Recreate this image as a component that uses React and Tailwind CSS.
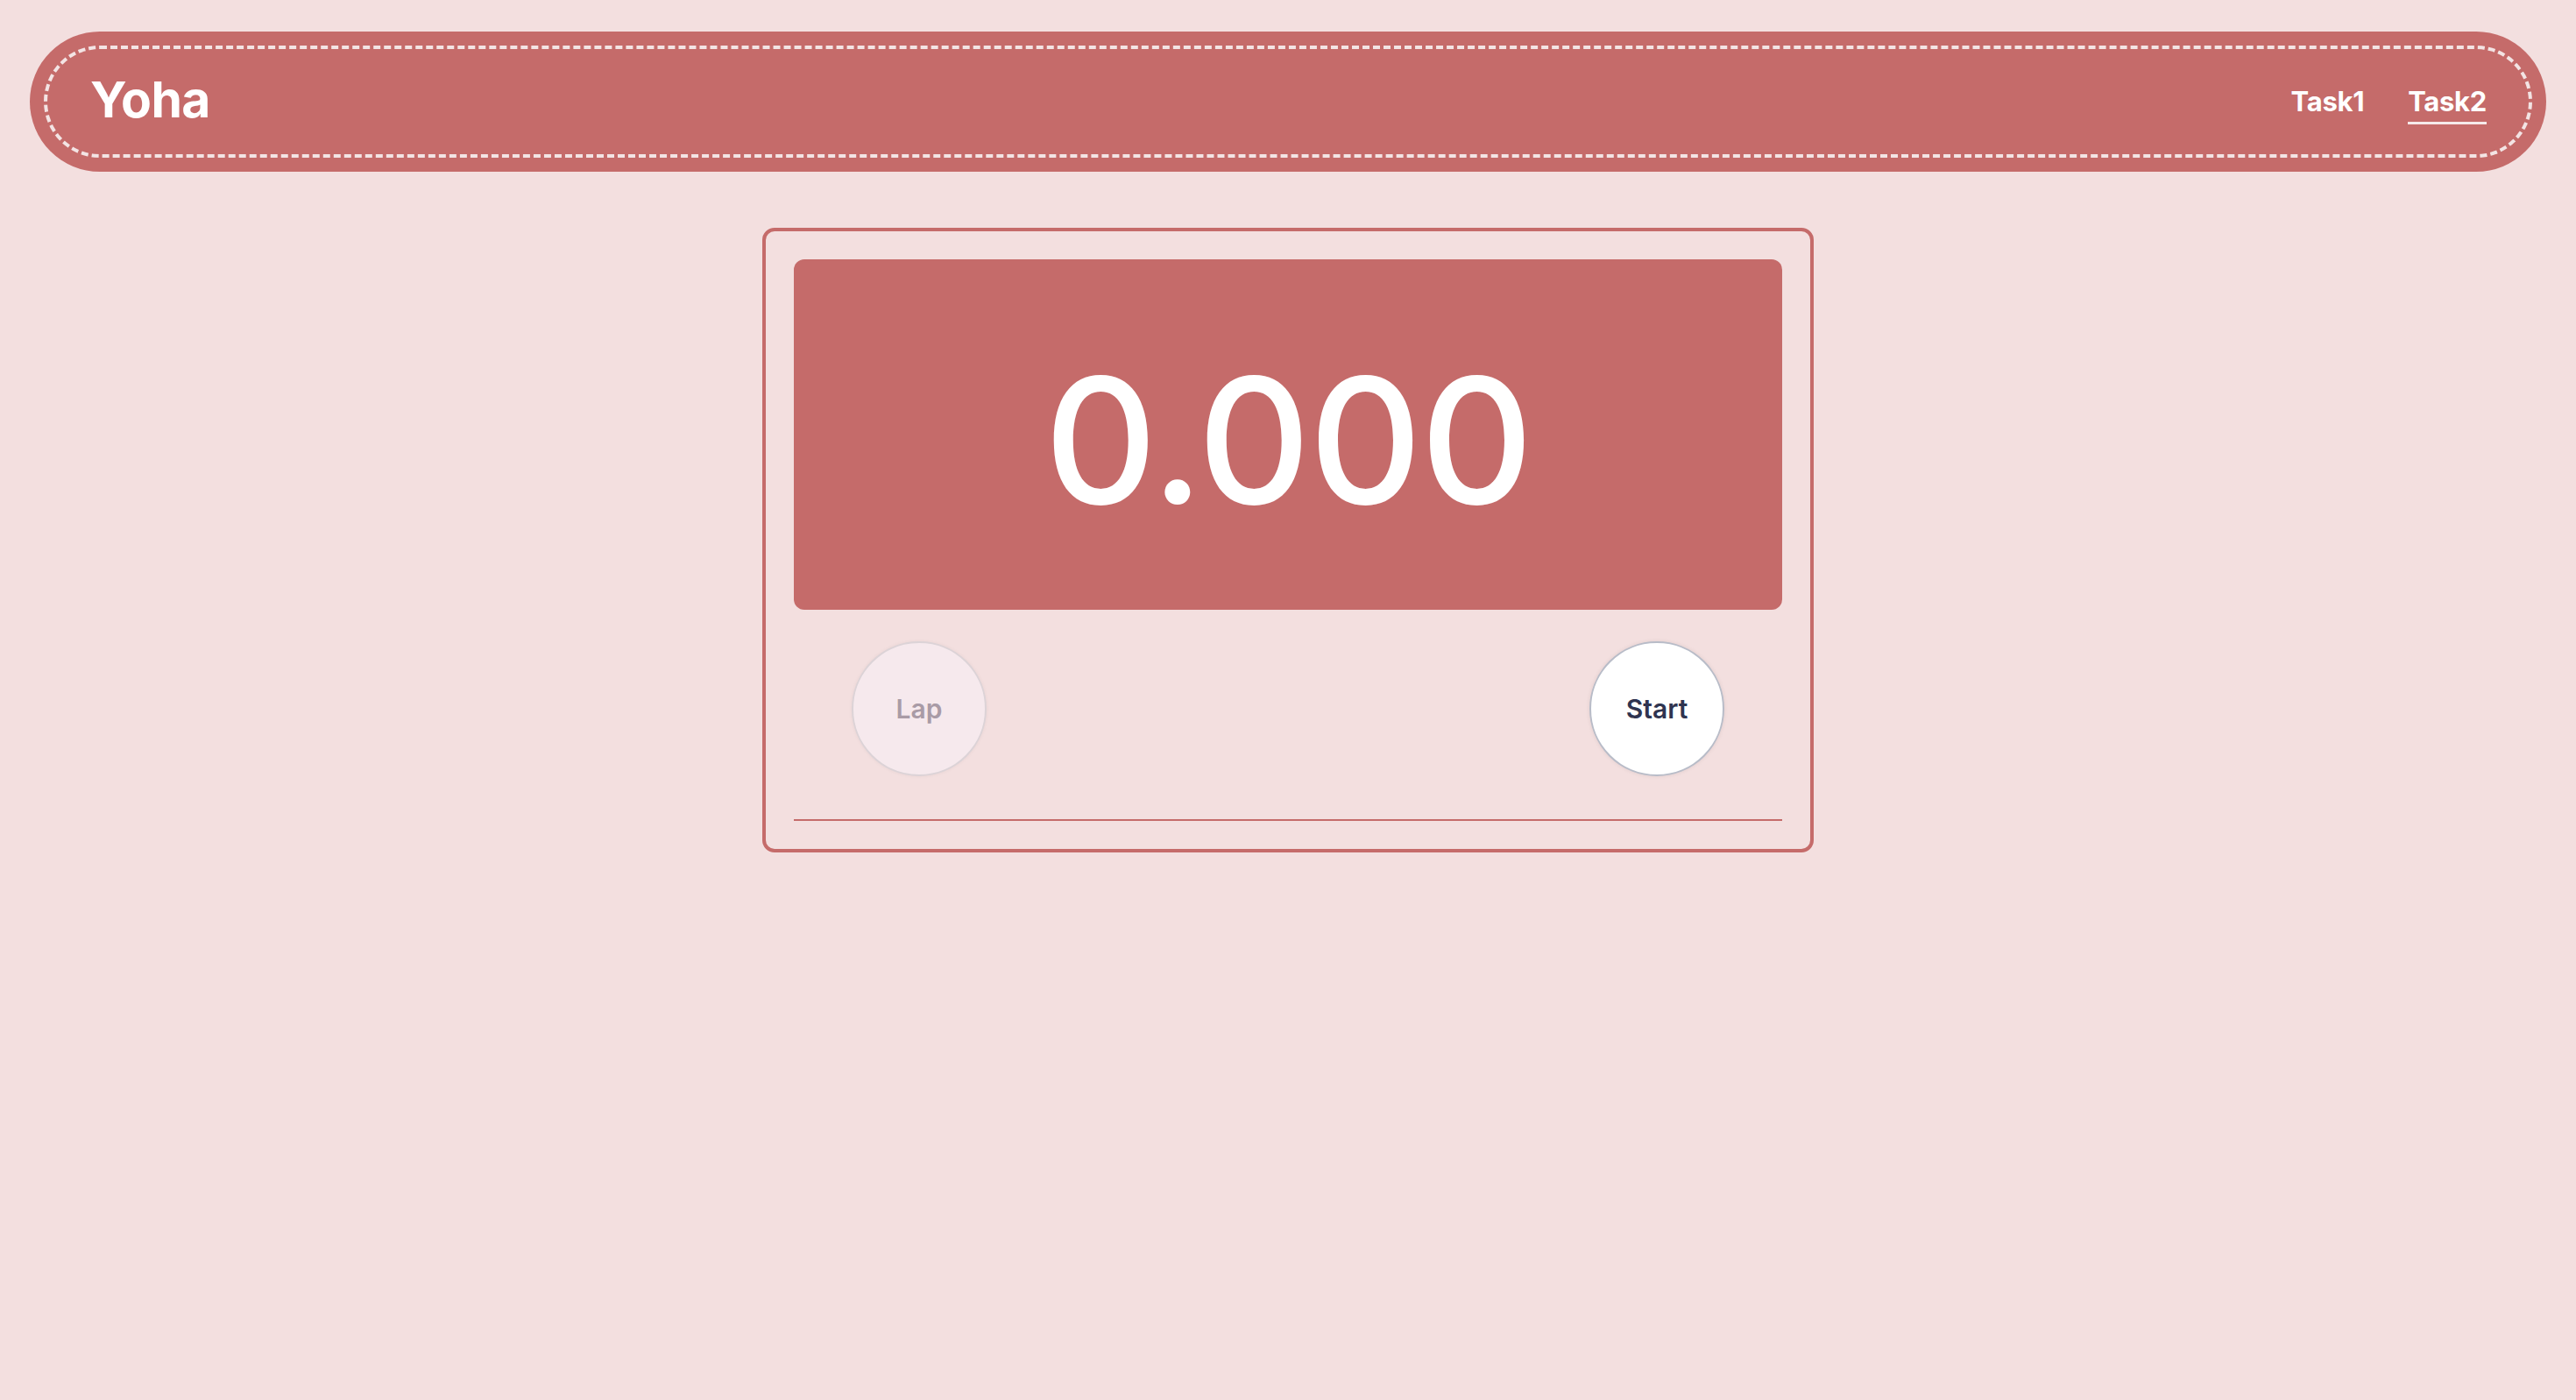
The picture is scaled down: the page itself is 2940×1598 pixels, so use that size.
import { useState } from "react"

export default function App() {
  const [running] = useState(false)

  return (
    <div className="min-h-screen w-full bg-[#f3dfdf] font-['Inter','Liberation_Sans',sans-serif] pt-[36px] px-[34px]">
      {/* Header */}
      <header className="h-[160px] rounded-full bg-[#c56b6a] p-[16px]">
        <div className="h-full rounded-full border-[4px] border-dashed border-[#f3e4e4] flex items-center justify-between pl-[49px] pr-[48px]">
          <h1 className="text-[57px] font-bold text-white leading-none tracking-[-0.5px] pb-[6px]">Yoha</h1>
          <nav className="flex items-center gap-[50px] pt-[10px]">
            <a className="text-[31px] font-bold text-white leading-none tracking-[-0.3px] pb-[8px] border-b-[3px] border-transparent">Task1</a>
            <a className="text-[31px] font-bold text-white leading-none tracking-[-0.3px] pb-[8px] border-b-[3px] border-[#f6eaea]">Task2</a>
          </nav>
        </div>
      </header>

      {/* Stopwatch */}
      <div className="flex justify-center mt-[64px]">
        <div className="w-[1200px] border-[4px] border-[#c56b6a] rounded-[14px] p-[32px]">
          <div className="h-[400px] rounded-[12px] bg-[#c56b6a] flex items-center justify-center pt-[12px]">
            <span className="text-[200px] font-medium text-white leading-none tracking-[-2px]">0.000</span>
          </div>

          <div className="flex items-center justify-between mt-[36px] px-[66px]">
            <button
              disabled={!running}
              className="w-[154px] h-[154px] rounded-full bg-[#f6e9ed] border-2 border-[#dcd3d7] text-[#a99ba6] text-[30px] font-semibold shadow-[0_0_4px_rgba(0,0,0,0.05)]"
            >
              Lap
            </button>
            <button className="w-[154px] h-[154px] rounded-full bg-white border-2 border-[#b8bcc8] text-[#2f3450] text-[30px] font-semibold shadow-[0_0_5px_rgba(0,0,0,0.08)]">
              Start
            </button>
          </div>

          <div className="mt-[49px] h-[2px] bg-[#c56b6a]" />
        </div>
      </div>
    </div>
  )
}
